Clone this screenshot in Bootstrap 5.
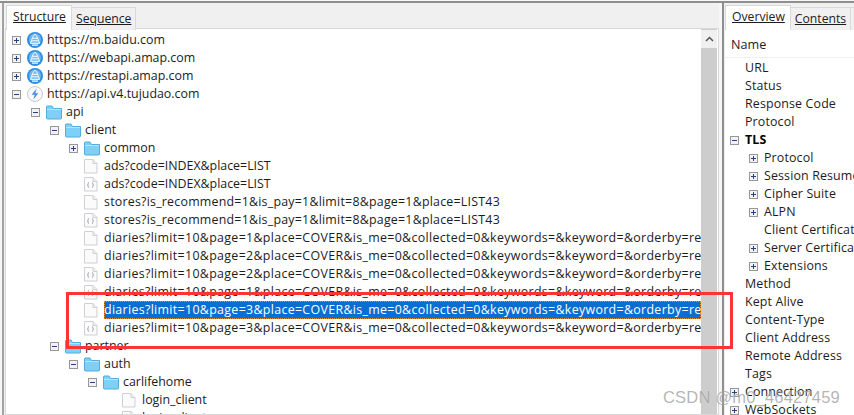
<!DOCTYPE html>
<html lang="en">
<head>
<meta charset="utf-8">
<title>Charles</title>
<link rel="stylesheet" href="https://cdn.jsdelivr.net/npm/bootstrap@5.3.0/dist/css/bootstrap.min.css">
<style>
html,body{height:415px;overflow:hidden}
body{background:#f6f6f6;font-family:"Open Sans","Noto Sans",sans-serif;font-size:12.4px;color:#1c1c1c;line-height:18px}
.app-shell{height:414px;margin-top:1px;border-top:2px solid #8f8f8f;position:relative;overflow:hidden}
.left-pane{width:717px;margin-left:2px;border-left:2px solid #a3a3a3;padding-left:1px;flex:none;background:#f0f0f0}
.pane-rule{width:2px;background:#8e8e8e;margin-left:3px;flex:none}
.right-pane{flex:1;min-width:0;padding-left:1px;background:#f0f0f0}
.tabs-x{height:25px;padding-top:2px;flex-wrap:nowrap;padding-left:1px}
.right-pane .tabs-x{padding-left:0}
.tabs-x .tab-x{display:block;border:1px solid #d9d9d9;border-bottom:0;background:#f0f0f0;color:#1c1c1c;height:23px;margin-top:2px;margin-left:-1px;padding:1px 4px 0;line-height:20px;border-radius:0;white-space:nowrap;font-size:12.2px}
.tabs-x .tab-x.on{background:#fff;height:25px;margin-top:0;margin-left:0;padding:1px 5px 0 6px;position:relative;z-index:1}
.tree-box{height:387px;background:#fff;border:1px solid #d9d9d9;overflow:hidden}
.tree-col{flex:1;min-width:0;overflow:hidden;padding-top:2px}
.row-x{height:18px;white-space:nowrap;flex-wrap:nowrap}
.lv0{padding-left:6px}.lv1{padding-left:25px}.lv2{padding-left:44px}.lv3{padding-left:63px}.lv4{padding-left:82px}.lv5{padding-left:101px}
.exp{width:9px;height:9px;flex:none;margin-right:6px}
.ic{width:16px;height:16px;flex:none;margin-right:4px}
.lbl{flex:none}
.lbl-mid{letter-spacing:.23px}
.lbl-long{letter-spacing:.33px}
.lbl.sel{background:#0a6ed1;color:#fff;outline:1px dotted #e0913a;outline-offset:-1px;width:597px;overflow:hidden}
.sb{width:16px;flex:none;background:#cdcdcd;margin-right:1px}
.sb-up{height:18px;background:#f0f0f0;margin-top:1px}
.right-box{background:#fff;height:387px;overflow:hidden}
.head-x{height:30px;padding:8px 0 0 6px;border-bottom:1px solid #efefef;font-size:12.6px}
.rows-x{padding-top:1px;letter-spacing:.15px}
.r0{padding-left:5px}.r1{padding-left:20px}.r2{padding-left:24px}.r3{padding-left:39px}
.fw-x{font-weight:700;color:#000}
.red-box{position:absolute;left:66px;top:289px;width:667px;height:57px;border:3px solid #fb3434;pointer-events:none;z-index:5}
.wm{position:absolute;left:663px;top:383px;font-family:"Liberation Sans",Arial,sans-serif;font-size:16.5px;line-height:22px;color:rgba(125,125,125,.58);text-shadow:0 0 1px rgba(255,255,255,.6);z-index:6;white-space:nowrap;letter-spacing:.2px}
</style>
</head>
<body>
<svg width="0" height="0" class="d-none">
  <symbol id="plus" viewBox="0 0 9 9"><rect x=".5" y=".5" width="8" height="8" fill="#f2f2f2" stroke="#979797"/><path d="M2 4.500h5M4.500 2v5" stroke="#27407f"/></symbol>
  <symbol id="minus" viewBox="0 0 9 9"><rect x=".5" y=".5" width="8" height="8" fill="#f2f2f2" stroke="#979797"/><path d="M2 4.500h5" stroke="#27407f"/></symbol>
  <symbol id="globe" viewBox="0 0 16 16"><circle cx="8" cy="8" r="8" fill="#2e8ee0"/><circle cx="8" cy="7.500" r="6" fill="#6db8f1"/><path d="M8 2.300C5.800 3.300 5 8 3.400 11.300h9.200C11 8 10.200 3.300 8 2.300ZM5.800 6.300h4.400M4.700 8.800h6.600M5 13.200h6" fill="none" stroke="#fff" stroke-width="1"/></symbol>
  <symbol id="bolt" viewBox="0 0 16 16"><circle cx="8" cy="8" r="7.500" fill="#f8f8fa" stroke="#c6c9d2"/><path d="M9.600 2.600 4.600 8.800h3L6.400 13.400l5-6.200h-3Z" fill="#4a90e2"/></symbol>
  <symbol id="folder" viewBox="0 0 16 16"><path d="M.5 2.500V14a1 1 0 0 0 1 1h13a1 1 0 0 0 1-1V4.500H7.500L6 2H1Z" fill="#7fd0f7" stroke="#55abd9"/><path d="M1 5.500h14" stroke="#b6e6fb"/></symbol>
  <symbol id="file" viewBox="0 0 16 16"><path d="M.5 1.500h8.500l4 4v9.500H.5Z" fill="#fbfbfb" stroke="#cfcfd4"/><path d="M9 1.500V5.500h4" fill="#eee" stroke="#cfcfd4"/></symbol>
  <symbol id="json" viewBox="0 0 16 16"><path d="M.5 1.500h8.500l4 4v9.500H.5Z" fill="#fbfbfb" stroke="#cfcfd4"/><path d="M9 1.500V5.500h4" fill="#eee" stroke="#cfcfd4"/><path d="M5 6.500c-1 0-.8 1-.8 1.700 0 .6-.6.800-.8.800.2 0 .8.200.8.800 0 .7-.2 1.700.8 1.700M8 6.500c1 0 .8 1 .8 1.700 0 .6.600.800.800.800-.2 0-.8.200-.8.800 0 .7.200 1.700-.8 1.700" fill="none" stroke="#8a8fa0" stroke-width=".8"/></symbol>
</svg>
<div class="app-shell d-flex">
  <div class="left-pane">
    <ul class="nav tabs-x">
      <li class="nav-item"><a class="tab-x on" href="#">Structure</a></li>
      <li class="nav-item"><a class="tab-x" href="#">Sequence</a></li>
    </ul>
    <div class="tree-box d-flex">
      <div class="tree-col">
        <div class="row-x d-flex align-items-center lv0"><svg class="exp"><use href="#plus"/></svg><svg class="ic"><use href="#globe"/></svg><span class="lbl">https://m.baidu.com</span></div>
        <div class="row-x d-flex align-items-center lv0"><svg class="exp"><use href="#plus"/></svg><svg class="ic"><use href="#globe"/></svg><span class="lbl">https://webapi.amap.com</span></div>
        <div class="row-x d-flex align-items-center lv0"><svg class="exp"><use href="#plus"/></svg><svg class="ic"><use href="#globe"/></svg><span class="lbl">https://restapi.amap.com</span></div>
        <div class="row-x d-flex align-items-center lv0"><svg class="exp"><use href="#minus"/></svg><svg class="ic"><use href="#bolt"/></svg><span class="lbl">https://api.v4.tujudao.com</span></div>
        <div class="row-x d-flex align-items-center lv1"><svg class="exp"><use href="#minus"/></svg><svg class="ic"><use href="#folder"/></svg><span class="lbl">api</span></div>
        <div class="row-x d-flex align-items-center lv2"><svg class="exp"><use href="#minus"/></svg><svg class="ic"><use href="#folder"/></svg><span class="lbl">client</span></div>
        <div class="row-x d-flex align-items-center lv3"><svg class="exp"><use href="#plus"/></svg><svg class="ic"><use href="#folder"/></svg><span class="lbl">common</span></div>
        <div class="row-x d-flex align-items-center lv3"><span class="exp"></span><svg class="ic"><use href="#file"/></svg><span class="lbl">ads?code=INDEX&amp;place=LIST</span></div>
        <div class="row-x d-flex align-items-center lv3"><span class="exp"></span><svg class="ic"><use href="#json"/></svg><span class="lbl">ads?code=INDEX&amp;place=LIST</span></div>
        <div class="row-x d-flex align-items-center lv3"><span class="exp"></span><svg class="ic"><use href="#file"/></svg><span class="lbl lbl-mid">stores?is_recommend=1&amp;is_pay=1&amp;limit=8&amp;page=1&amp;place=LIST43</span></div>
        <div class="row-x d-flex align-items-center lv3"><span class="exp"></span><svg class="ic"><use href="#json"/></svg><span class="lbl lbl-mid">stores?is_recommend=1&amp;is_pay=1&amp;limit=8&amp;page=1&amp;place=LIST43</span></div>
        <div class="row-x d-flex align-items-center lv3"><span class="exp"></span><svg class="ic"><use href="#file"/></svg><span class="lbl lbl-long">diaries?limit=10&amp;page=1&amp;place=COVER&amp;is_me=0&amp;collected=0&amp;keywords=&amp;keyword=&amp;orderby=recent</span></div>
        <div class="row-x d-flex align-items-center lv3"><span class="exp"></span><svg class="ic"><use href="#file"/></svg><span class="lbl lbl-long">diaries?limit=10&amp;page=2&amp;place=COVER&amp;is_me=0&amp;collected=0&amp;keywords=&amp;keyword=&amp;orderby=recent</span></div>
        <div class="row-x d-flex align-items-center lv3"><span class="exp"></span><svg class="ic"><use href="#json"/></svg><span class="lbl lbl-long">diaries?limit=10&amp;page=2&amp;place=COVER&amp;is_me=0&amp;collected=0&amp;keywords=&amp;keyword=&amp;orderby=recent</span></div>
        <div class="row-x d-flex align-items-center lv3"><span class="exp"></span><svg class="ic"><use href="#json"/></svg><span class="lbl lbl-long">diaries?limit=10&amp;page=1&amp;place=COVER&amp;is_me=0&amp;collected=0&amp;keywords=&amp;keyword=&amp;orderby=recent</span></div>
        <div class="row-x d-flex align-items-center lv3"><span class="exp"></span><svg class="ic"><use href="#file"/></svg><span class="lbl lbl-long sel">diaries?limit=10&amp;page=3&amp;place=COVER&amp;is_me=0&amp;collected=0&amp;keywords=&amp;keyword=&amp;orderby=recent</span></div>
        <div class="row-x d-flex align-items-center lv3"><span class="exp"></span><svg class="ic"><use href="#json"/></svg><span class="lbl lbl-long">diaries?limit=10&amp;page=3&amp;place=COVER&amp;is_me=0&amp;collected=0&amp;keywords=&amp;keyword=&amp;orderby=recent</span></div>
        <div class="row-x d-flex align-items-center lv2"><svg class="exp"><use href="#minus"/></svg><svg class="ic"><use href="#folder"/></svg><span class="lbl">partner</span></div>
        <div class="row-x d-flex align-items-center lv3"><svg class="exp"><use href="#minus"/></svg><svg class="ic"><use href="#folder"/></svg><span class="lbl">auth</span></div>
        <div class="row-x d-flex align-items-center lv4"><svg class="exp"><use href="#minus"/></svg><svg class="ic"><use href="#folder"/></svg><span class="lbl">carlifehome</span></div>
        <div class="row-x d-flex align-items-center lv5"><span class="exp"></span><svg class="ic"><use href="#file"/></svg><span class="lbl">login_client</span></div>
        <div class="row-x d-flex align-items-center lv5"><span class="exp"></span><svg class="ic"><use href="#json"/></svg><span class="lbl">login_client</span></div>
      </div>
      <div class="sb"><div class="sb-up d-flex justify-content-center align-items-center"><svg width="9" height="6" viewBox="0 0 9 6"><path d="M1 5 4.500 1.500 8 5" fill="none" stroke="#555" stroke-width="1.500"/></svg></div></div>
    </div>
  </div>
  <div class="pane-rule"></div>
  <div class="right-pane">
    <ul class="nav tabs-x">
      <li class="nav-item"><a class="tab-x on" href="#">Overview</a></li>
      <li class="nav-item"><a class="tab-x" href="#">Contents</a></li>
      <li class="nav-item"><a class="tab-x" href="#">&nbsp;</a></li>
    </ul>
    <div class="right-box">
      <div class="head-x">Name</div>
      <div class="rows-x">
        <div class="row-x r1">URL</div>
        <div class="row-x r1">Status</div>
        <div class="row-x r1">Response Code</div>
        <div class="row-x r1">Protocol</div>
        <div class="row-x r0 d-flex align-items-center"><svg class="exp"><use href="#minus"/></svg><span class="fw-x">TLS</span></div>
        <div class="row-x r2 d-flex align-items-center"><svg class="exp"><use href="#plus"/></svg><span>Protocol</span></div>
        <div class="row-x r2 d-flex align-items-center"><svg class="exp"><use href="#plus"/></svg><span>Session Resumed</span></div>
        <div class="row-x r2 d-flex align-items-center"><svg class="exp"><use href="#plus"/></svg><span>Cipher Suite</span></div>
        <div class="row-x r2 d-flex align-items-center"><svg class="exp"><use href="#plus"/></svg><span>ALPN</span></div>
        <div class="row-x r3">Client Certificates</div>
        <div class="row-x r2 d-flex align-items-center"><svg class="exp"><use href="#plus"/></svg><span>Server Certificates</span></div>
        <div class="row-x r2 d-flex align-items-center"><svg class="exp"><use href="#plus"/></svg><span>Extensions</span></div>
        <div class="row-x r1">Method</div>
        <div class="row-x r1">Kept Alive</div>
        <div class="row-x r1">Content-Type</div>
        <div class="row-x r1">Client Address</div>
        <div class="row-x r1">Remote Address</div>
        <div class="row-x r1">Tags</div>
        <div class="row-x r0 d-flex align-items-center"><svg class="exp"><use href="#plus"/></svg><span>Connection</span></div>
        <div class="row-x r0 d-flex align-items-center"><svg class="exp"><use href="#plus"/></svg><span>WebSockets</span></div>
      </div>
    </div>
  </div>
  <div class="red-box"></div>
  <div class="wm">CSDN @m0_46427459</div>
</div>
<script src="https://cdn.jsdelivr.net/npm/bootstrap@5.3.0/dist/js/bootstrap.bundle.min.js"></script>
</body>
</html>
